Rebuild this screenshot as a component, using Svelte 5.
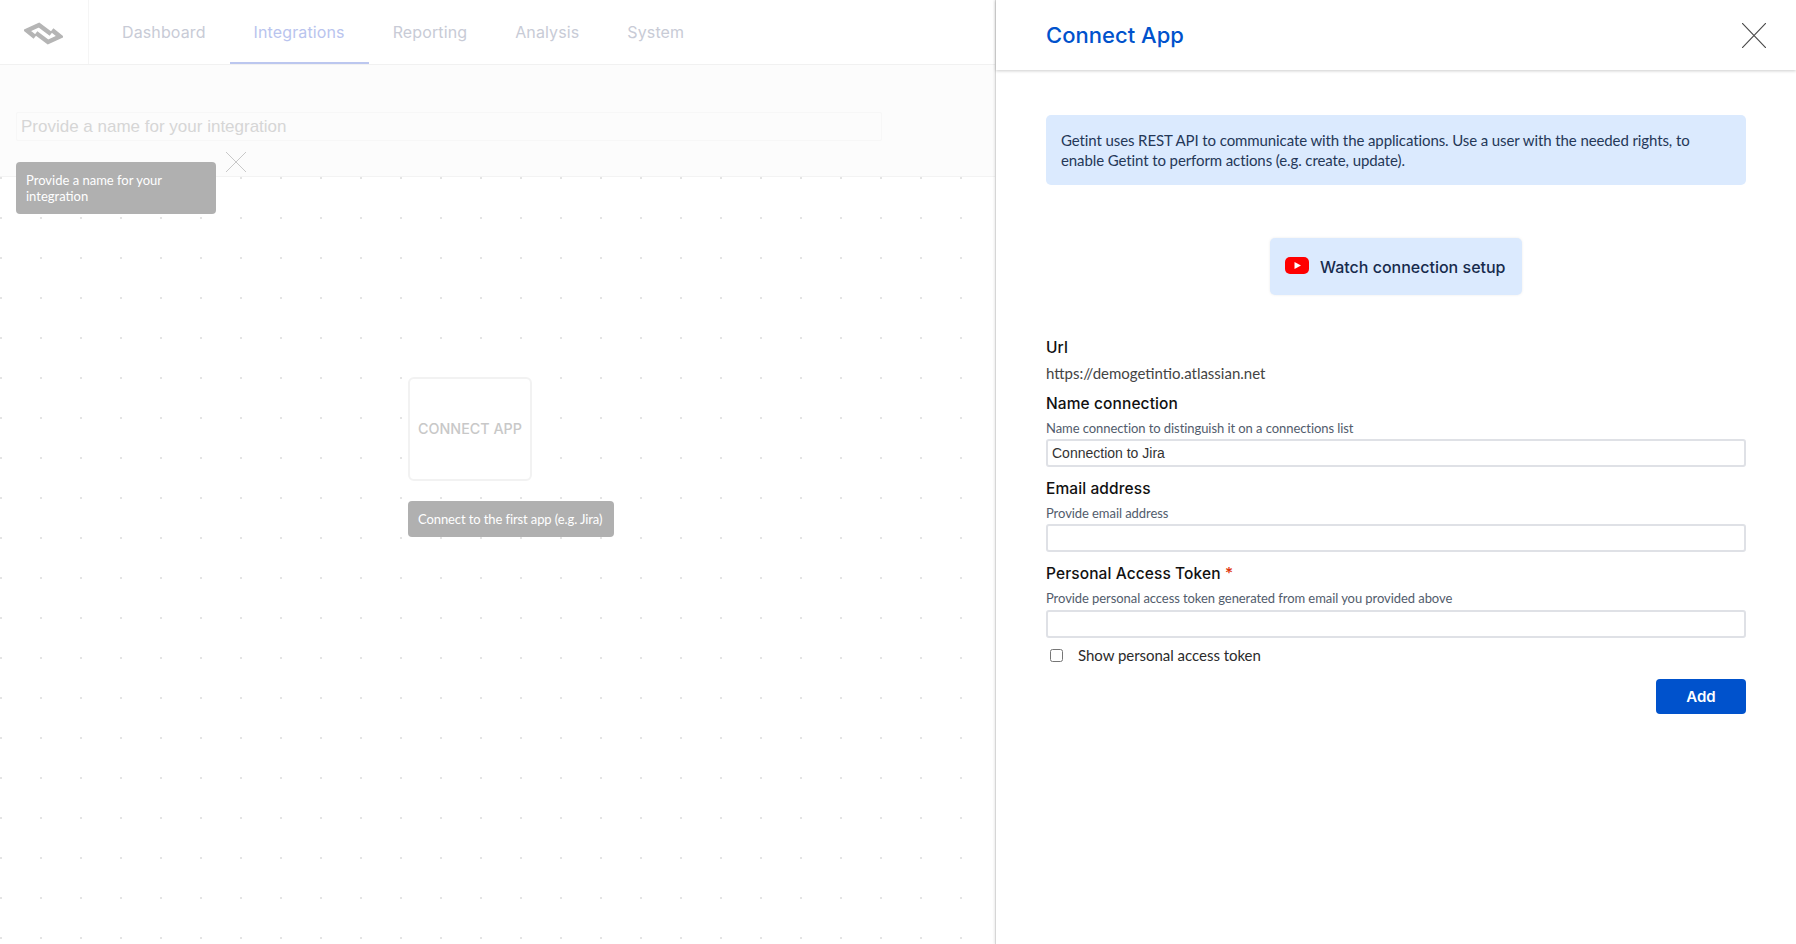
<script lang="ts">
	const tabs = ['Dashboard', 'Integrations', 'Reporting', 'Analysis', 'System'];
	const activeTab = 'Integrations';

	let connectionName = $state('Connection to Jira');
	let email = $state('');
	let token = $state('');
	let showToken = $state(false);
</script>

<div class="page">
	<div class="workspace">
		<header class="topbar">
			<div class="logo">
				<svg width="39" height="23" viewBox="0 0 39 23" fill="none" stroke="#b5b5b5" stroke-width="4.5">
					<path d="M11 15 L3 8.5 L15 3 L27 12" />
					<path d="M28 8 L36 14.5 L24 20 L12 11" />
				</svg>
			</div>
			<nav class="tabs">
				{#each tabs as tab}
					<div class="tab" class:active={tab === activeTab}>{tab}</div>
				{/each}
			</nav>
		</header>

		<div class="name-bar">
			<div class="name-input">Provide a name for your integration</div>
			<svg class="hint-close" width="20" height="20" viewBox="0 0 20 20" stroke="#c8c8c8" stroke-width="1">
				<path d="M0 0 L20 20 M20 0 L0 20" />
			</svg>
			<div class="hint hint-name">Provide a name for your integration</div>
		</div>

		<div class="canvas">
			<div class="connect-node">CONNECT APP</div>
			<div class="hint hint-connect">Connect to the first app (e.g. Jira)</div>
		</div>
	</div>

	<aside class="panel">
		<div class="panel-head">
			<h2>Connect App</h2>
			<svg width="24" height="25" viewBox="0 0 24 25" stroke="#4a4a4a" stroke-width="1.2">
				<path d="M0 0 L24 25 M24 0 L0 25" />
			</svg>
		</div>

		<div class="panel-body">
			<div class="info">
				Getint uses REST API to communicate with the applications. Use a user with the needed rights, to enable Getint to perform actions (e.g. create, update).
			</div>

			<div class="watch-row">
				<div class="watch">
					<svg width="24" height="17" viewBox="0 0 24 17">
						<rect width="24" height="17" rx="5" fill="#f00" />
						<path d="M9.5 5 L16 8.5 L9.5 12 Z" fill="#fff" />
					</svg>
					<span>Watch connection setup</span>
				</div>
			</div>

			<div class="url">
				<div class="label">Url</div>
				<div class="url-value">https://demogetintio.atlassian.net</div>
			</div>

			<div class="field">
				<div class="label">Name connection</div>
				<div class="help">Name connection to distinguish it on a connections list</div>
				<input type="text" bind:value={connectionName} />
			</div>
			<div class="field">
				<div class="label">Email address</div>
				<div class="help">Provide email address</div>
				<input type="text" bind:value={email} />
			</div>
			<div class="field">
				<div class="label">Personal Access Token <span class="req">*</span></div>
				<div class="help">Provide personal access token generated from email you provided above</div>
				<input class="token" type={showToken ? 'text' : 'password'} bind:value={token} />
			</div>

			<label class="show-token">
				<input type="checkbox" bind:checked={showToken} />
				<span>Show personal access token</span>
			</label>

			<div class="actions">
				<button type="button">Add</button>
			</div>
		</div>
	</aside>
</div>

<style>
	:global(body) {
		margin: 0;
		background: #fff;
	}

	.page {
		display: flex;
		height: 944px;
		overflow: hidden;
		font-family: Lato, sans-serif;
	}

	.workspace {
		display: flex;
		flex-direction: column;
		width: 995px;
		flex: none;
	}

	.topbar {
		display: flex;
		height: 65px;
		flex: none;
		box-sizing: border-box;
		border-bottom: 1px solid #f1f1f1;
	}

	.logo {
		display: flex;
		align-items: center;
		justify-content: center;
		width: 89px;
		box-sizing: border-box;
		padding-top: 3px;
		padding-right: 1px;
		border-right: 1px solid #f5f5f5;
	}

	.tabs {
		display: flex;
		margin-left: 9px;
	}

	.tab {
		display: flex;
		align-items: center;
		box-sizing: border-box;
		height: 64px;
		padding: 1px 24px 0;
		font-family: Inter, sans-serif;
		font-size: 16px;
		letter-spacing: 0.12px;
		color: #c8cbd6;
		border-bottom: 2px solid transparent;
	}

	.tab.active {
		color: #b9c4ee;
		border-bottom-color: #bcc7ef;
	}

	.name-bar {
		position: relative;
		height: 112px;
		flex: none;
		box-sizing: border-box;
		padding: 47px 113px 0 16px;
		background: #fcfcfc;
		border-bottom: 1px solid #f3f3f3;
	}

	.name-input {
		height: 29px;
		box-sizing: border-box;
		padding: 0 4px;
		line-height: 27px;
		font-family: "Liberation Sans", Arial, sans-serif;
		font-size: 17px;
		color: #d6d6d6;
		border: 1px solid #f7f7f7;
		border-radius: 2px;
	}

	.hint-close {
		position: absolute;
		left: 226px;
		top: 87px;
	}

	.hint {
		position: absolute;
		box-sizing: border-box;
		color: #fff;
		background: #b0b0b0;
		border-radius: 4px;
		font-size: 13px;
		line-height: 16px;
	}

	.hint-name {
		z-index: 1;
		left: 16px;
		top: 97px;
		width: 200px;
		height: 52px;
		padding: 10px;
	}

	.canvas {
		position: relative;
		flex: 1;
		background-image: radial-gradient(circle at 1px 1px, #e4e4e4 1px, transparent 1.3px);
		background-size: 40px 40px;
	}

	.connect-node {
		position: absolute;
		left: 408px;
		top: 200px;
		display: flex;
		align-items: center;
		justify-content: center;
		box-sizing: border-box;
		width: 124px;
		height: 104px;
		padding-bottom: 2px;
		background: #fff;
		border: 2px solid #f2f2f2;
		border-radius: 6px;
		font-family: Inter, sans-serif;
		font-size: 14.3px;
		font-weight: 500;
		color: #c8c8c8;
	}

	.hint-connect {
		left: 408px;
		top: 324px;
		width: 206px;
		height: 36px;
		padding: 10px;
		letter-spacing: -0.1px;
		white-space: nowrap;
	}

	.panel {
		flex: 1;
		min-width: 0;
		background: #fff;
		border-left: 1px solid #d6d6d6;
		box-shadow: -1px 0 2px rgba(0, 0, 0, 0.08);
		z-index: 2;
	}

	.panel-head {
		display: flex;
		align-items: center;
		justify-content: space-between;
		box-sizing: border-box;
		height: 70px;
		padding: 0 30px 0 50px;
		box-shadow: 0 1px 3px rgba(0, 0, 0, 0.2);
	}

	.panel-head h2 {
		margin: 0;
		font-family: Inter, sans-serif;
		font-size: 22px;
		font-weight: 500;
		letter-spacing: 0.02px;
		color: #0052cc;
	}

	.panel-body {
		padding: 45px 50px 0;
	}

	.info {
		box-sizing: border-box;
		height: 70px;
		padding: 15px 15px;
		font-size: 15px;
		line-height: 20px;
		letter-spacing: -0.1px;
		color: #253858;
		background: #dbeafe;
		border-radius: 5px;
	}

	.watch-row {
		display: flex;
		justify-content: center;
		margin-top: 53px;
	}

	.watch {
		display: flex;
		align-items: center;
		gap: 11px;
		box-sizing: border-box;
		width: 252px;
		height: 57px;
		padding-left: 15px;
		background: #dbeafe;
		border-radius: 5px;
		box-shadow: 0 0 3px rgba(0, 0, 0, 0.08);
		font-family: Inter, sans-serif;
		font-size: 16px;
		font-weight: 500;
		color: #172b4d;
	}

	.watch svg {
		margin-bottom: 3px;
	}

	.url {
		margin-top: 41px;
		margin-bottom: 8px;
	}

	.label {
		font-family: Inter, sans-serif;
		font-size: 15.5px;
		font-weight: 500;
		line-height: 24px;
		letter-spacing: 0.1px;
		color: #111;
	}

	.req {
		color: #de350b;
	}

	.url-value {
		margin-top: 3px;
		font-size: 15px;
		line-height: 20px;
		color: #444;
	}

	.field {
		margin-bottom: 9px;
	}

	.field .label {
		padding-top: 1px;
	}

	.help {
		margin-top: 4px;
		font-size: 13px;
		line-height: 16px;
		letter-spacing: -0.07px;
		color: #525c6c;
	}

	.field input {
		display: block;
		width: 100%;
		height: 28px;
		box-sizing: border-box;
		margin: 3px 0 0;
		padding: 0 4px;
		font-family: "Liberation Sans", Arial, sans-serif;
		font-size: 14px;
		color: #333;
		background: #fff;
		border: 2px solid #dfe1e6;
		border-radius: 3px;
		outline: none;
	}

	.field input.token {
		margin-top: 4px;
	}

	.show-token {
		display: flex;
		align-items: center;
		margin-top: -2px;
		padding-left: 4px;
		height: 20px;
		font-size: 15px;
		letter-spacing: -0.03px;
		color: #2b2b2b;
	}

	.show-token input {
		width: 13px;
		height: 13px;
		margin: 0 15px 0 0;
	}

	.actions {
		display: flex;
		justify-content: flex-end;
		margin-top: 14px;
	}

	.actions button {
		width: 90px;
		height: 35px;
		padding: 0;
		font-family: Inter, sans-serif;
		font-size: 15px;
		font-weight: 600;
		color: #fff;
		background: #0052cc;
		border: 0;
		border-radius: 4px;
	}
</style>
